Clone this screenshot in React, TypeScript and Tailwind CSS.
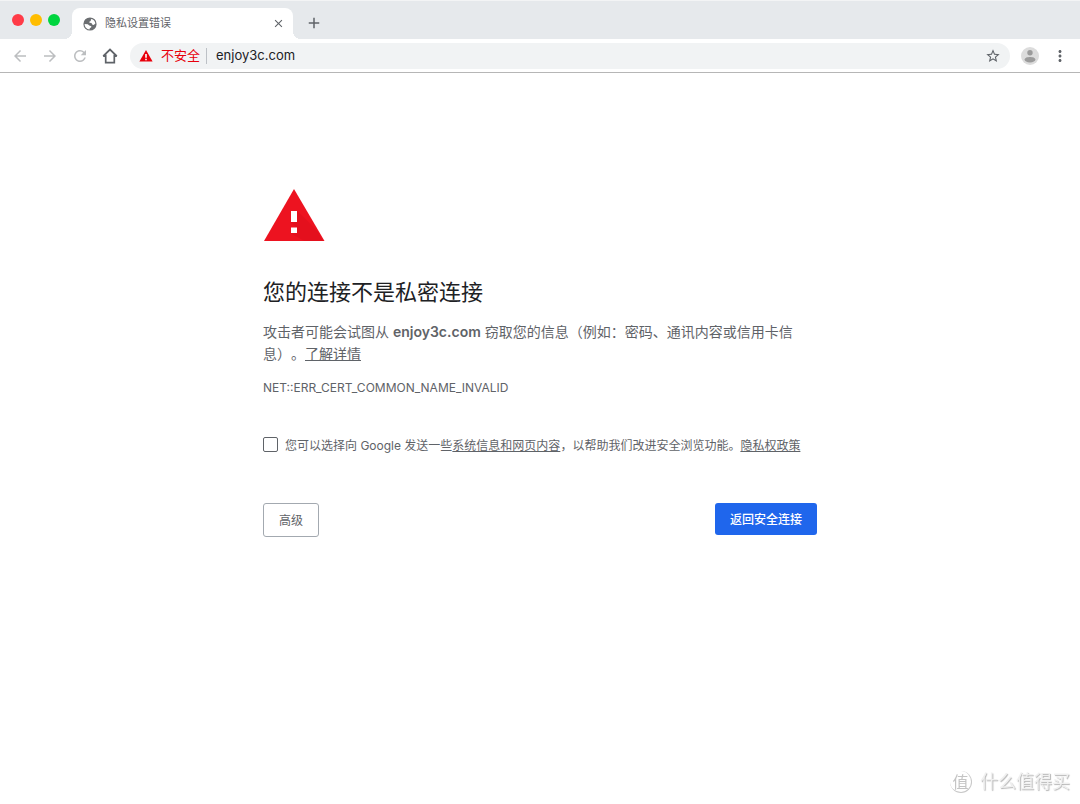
import type { ReactNode } from "react";
import { MdAdd, MdArrowBack, MdArrowForward, MdClose, MdMoreVert, MdRefresh, MdStarBorder } from "react-icons/md";

function GlobeIcon() {
  return (
    <svg viewBox="0 0 16 16" className="size-4">
      <circle cx="8" cy="8" r="6.600" fill="#6b6e71" />
      <path d="M9.200 2.900c2.300.5 4 2.300 4.200 4.500l-1.700 1.500-1.500-.3-.7-1.500-2-.4-.2-1 1.400-.8.200-1.100Z" fill="#fff" />
      <path d="M2.600 8.100l3.200.1 1.500 1.300 2.100.7-.3 1.200-1.200.6-.4 1.500C4.600 13.300 2.600 11 2.600 8.100Z" fill="#fff" />
    </svg>
  );
}

function HomeIcon() {
  return (
    <svg viewBox="0 0 18 18" className="size-[18px]" fill="none" stroke="#5f6368">
      <path d="M2.200 9.200 9 2.600l6.800 6.600" strokeWidth="1.800" />
      <path d="M4.700 7.500v8.100h8.600V7.500M2.300 9.100h2.400M13.300 9.100h2.400" strokeWidth="1.700" />
    </svg>
  );
}

function WarningIcon() {
  return (
    <svg viewBox="0 0 16 16" className="size-4">
      <path d="M8 2 14.600 13.600H1.400Z" fill="#e8000b" />
      <path d="M7.200 6h1.600v3.700H7.200zM7.200 10.700h1.600v1.500H7.200z" fill="#fff" />
    </svg>
  );
}

function DangerTriangle() {
  return (
    <svg viewBox="0 0 61 52" className="ml-px h-[52px] w-[61px]">
      <path d="M30 0 60.500 52H0Z" fill="#ed1320" />
      {/* long shadow of the exclamation mark */}
      <path d="M33 22 41 29.500 54 43 59 52H40.500L27 44.500 33 38.500 27 33.500Z" fill="#e0101d" opacity="0.7" />
      <path d="M27 22h6v11h-6zM27 38.500h6v5.500h-6z" fill="#fff" />
    </svg>
  );
}

function Avatar() {
  return (
    <svg viewBox="0 0 18 18" className="size-[18px]">
      <circle cx="9" cy="9" r="9" fill="#dcdcdc" />
      <circle cx="9" cy="5.800" r="2.700" fill="#9b9b9b" />
      <path d="M3.600 12.600c0-2 3-2.700 5.400-2.700s5.400.7 5.400 2.700c0 1.700-2.400 2.900-5.400 2.900s-5.400-1.200-5.400-2.900Z" fill="#9b9b9b" />
    </svg>
  );
}

function IconButton({ label, children }: { label: string; children: ReactNode }) {
  return (
    <button type="button" aria-label={label} className="flex size-[18px] shrink-0 items-center justify-center">
      {children}
    </button>
  );
}

function TabStrip() {
  return (
    <div className="flex h-[39px] items-end border-t border-[#f3f4f5] bg-[#e6e9ec] pl-3">
      <div className="mb-[13px] flex gap-[6px]">
        <span className="size-3 rounded-full bg-[#ff3b47]" />
        <span className="size-3 rounded-full bg-[#ffbd00]" />
        <span className="size-3 rounded-full bg-[#00d53f]" />
      </div>
      <div className="ml-1 flex items-end">
        <span className="size-2 bg-[radial-gradient(circle_at_0_0,transparent_8px,white_8px)]" />
        <div className="flex h-[31px] w-[221px] items-center rounded-t-lg bg-white pr-[6px] pl-[10px]">
          <GlobeIcon />
          <span className="ml-[7px] flex-1 text-[11px] text-[#5f6368]">隐私设置错误</span>
          <IconButton label="关闭标签页">
            <MdClose className="size-[13px] text-[#5f6368]" />
          </IconButton>
        </div>
        <span className="size-2 bg-[radial-gradient(circle_at_100%_0,transparent_8px,white_8px)]" />
      </div>
      <div className="mb-[7px] ml-1">
        <IconButton label="新标签页">
          <MdAdd className="size-[18px] text-[#5f6368]" />
        </IconButton>
      </div>
    </div>
  );
}

function Toolbar() {
  return (
    <div className="flex h-[34px] items-center border-b border-[#b6b6b6] bg-white pr-[11px] pl-[11px]">
      <div className="flex gap-3">
        <IconButton label="后退">
          <MdArrowBack className="size-5 text-[#bcbec0]" />
        </IconButton>
        <IconButton label="前进">
          <MdArrowForward className="size-5 text-[#bcbec0]" />
        </IconButton>
        <IconButton label="重新加载">
          <MdRefresh className="size-5 text-[#bcbec0]" />
        </IconButton>
        <IconButton label="主页">
          <HomeIcon />
        </IconButton>
      </div>
      <div className="ml-[11px] flex h-[26px] flex-1 items-center rounded-full bg-[#f1f3f4] pr-2 pl-2">
        <WarningIcon />
        <span className="ml-[7px] text-[13px] text-[#e8000b]">不安全</span>
        <span className="mx-[6px] h-4 w-px bg-[#bdc1c6]" />
        <input
          type="text"
          aria-label="地址"
          defaultValue="enjoy3c.com"
          className="ml-[3px] min-w-0 flex-1 bg-transparent text-[13px] text-[#202124] outline-none"
        />
        <IconButton label="添加书签">
          <MdStarBorder className="size-4 text-[#5f6368]" />
        </IconButton>
      </div>
      <div className="ml-[11px] flex gap-3">
        <IconButton label="用户">
          <Avatar />
        </IconButton>
        <IconButton label="更多">
          <MdMoreVert className="size-[18px] text-[#5f6368]" />
        </IconButton>
      </div>
    </div>
  );
}

function Watermark() {
  return (
    <div className="fixed right-[10px] bottom-[10px] flex items-center gap-2 text-[#f0f0f0] [text-shadow:1px_1px_1px_#b4b4b4]">
      <span className="flex size-[22px] items-center justify-center rounded-full border-r border-b border-[#c8c8c8] text-[16px] text-[#c4c4c4] [text-shadow:none]">
        值
      </span>
      <span className="text-[18px] leading-6">什么值得买</span>
    </div>
  );
}

export default function App() {
  return (
    <div className="min-h-screen bg-white font-['Inter','Noto_Sans_CJK_SC',sans-serif] [text-spacing-trim:space-all]">
      <TabStrip />
      <Toolbar />
      <main className="mx-auto max-w-[554px] pt-[116px] text-[#5f6368]">
        <DangerTriangle />
        <h1 className="mt-[35px] text-[22px] leading-8 text-[#202124]">您的连接不是私密连接</h1>
        <p className="mt-[13px] text-[14px] leading-[22px]">
          攻击者可能会试图从 <strong className="font-semibold">enjoy3c.com</strong>{" "}
          窃取您的信息（例如：密码、通讯内容或信用卡信息）。
          <a href="#details" className="underline">
            了解详情
          </a>
        </p>
        <div className="mt-[13px] text-[12px] leading-5">NET::ERR_CERT_COMMON_NAME_INVALID</div>
        <div className="mt-[38px] flex items-start text-[12px] leading-5">
          <input
            id="report"
            type="checkbox"
            className="mt-px mr-[7px] size-[15px] shrink-0 appearance-none rounded-xs border border-[#5f6368] bg-white checked:bg-[#1a66e8]"
          />
          <label htmlFor="report">
            您可以选择向 Google 发送一些
            <a href="#info" className="underline">
              系统信息和网页内容
            </a>
            ，以帮助我们改进安全浏览功能。
            <a href="#privacy" className="underline">
              隐私权政策
            </a>
          </label>
        </div>
        <div className="mt-[47px] flex items-start justify-between text-[12px]">
          <button type="button" className="h-[34px] rounded-[3px] border border-[#a3a9b0] px-[15px] pt-px">
            高级
          </button>
          <button type="button" className="h-8 rounded-[3px] bg-[#1f66ec] px-[15px] pt-px font-medium text-white">
            返回安全连接
          </button>
        </div>
      </main>
      <Watermark />
    </div>
  );
}
